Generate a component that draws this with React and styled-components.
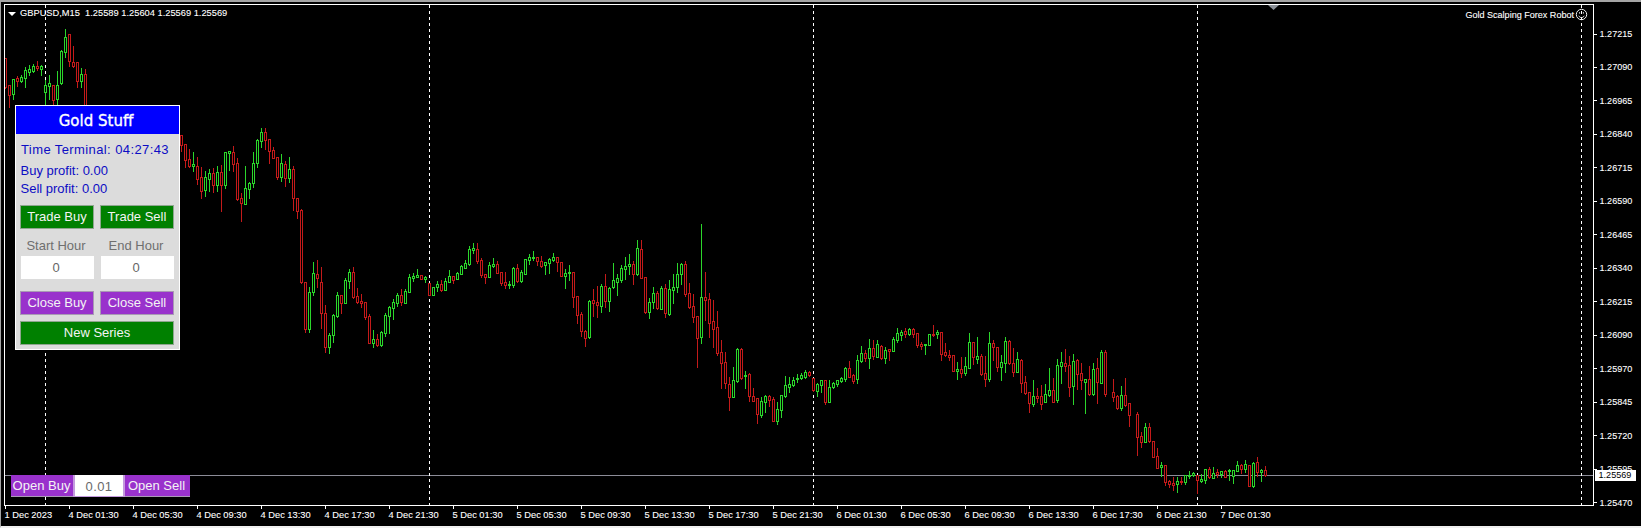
import React from 'react';
import styled, { createGlobalStyle, css } from 'styled-components';

const GlobalStyle = createGlobalStyle`
  html, body {
    margin: 0;
    background: #f0f0f0;
    overflow: hidden;
  }
`;

const BULL = '#2bd62b';
const BEAR = '#c41a1a';

// [first candle x, "type high top bottom low" separated by |, - is an empty slot]
const SERIES = [
  [
    5,
    `r 58 58 87 88|r 85 85 95 107|g 79 79 94 99|r 76 78 81 86|g 75 77 81 82|g 67 70 78 87|g 65 69 72 75|g 64 66 71 72|r 61 66 68 70|g 65 66 69 75|g 80 85 92 106|g 75 83 86 99|r 85 85 100 107|g 71 85 99 105|g 50 51 83 84|g 29 37 52 57|r 34 34 61 66|r 46 62 66 67|r 62 62 81 87|g 68 74 81 87|r 69 74 105 106`,
  ],
  [
    181,
    `r 135 135 145 151|r 144 144 160 167|r 149 159 166 167|g 152 164 166 171|r 157 166 179 184|r 167 177 191 198|g 171 177 190 196|g 169 173 179 191|r 168 173 185 192|g 166 172 185 191|r 165 172 185 211|g 152 152 185 188|g 151 151 153 170|r 146 152 164 171|r 158 163 199 200|r 193 198 203 221|g 166 188 204 204|g 182 183 189 198|g 152 163 183 187|g 139 140 163 167|g 128 132 141 147|r 128 132 140 149|r 139 139 151 163|r 147 150 158 158|r 157 157 177 179|g 154 163 177 181|r 161 164 178 186|g 157 169 178 182|r 166 169 198 210|r 198 198 211 218|r 209 210 282 283|r 282 282 329 332|g 287 292 329 332|g 262 273 292 295|r 260 274 278 287|r 267 282 313 328|r 305 313 347 352|g 333 335 347 353|g 314 315 335 342|g 292 295 316 317|r 295 295 303 313|g 278 280 303 303|g 269 272 281 288|r 267 272 297 298|r 288 296 302 303|r 294 301 303 307|r 302 302 317 319|r 314 316 343 343|g 330 339 343 347|r 334 339 345 346|g 331 332 345 346|g 313 315 333 336|g 306 307 316 333|g 299 302 308 319|g 293 295 303 306|r 289 295 302 305|g 289 291 303 303|g 274 277 292 292|g 273 276 278 281|g 269 275 277 277|r 275 275 279 279|g 276 277 279 282|r 283 283 295 295|g 287 287 295 295|g 281 284 287 291|r 280 284 290 291|g 278 281 290 290|g 270 276 282 282|r 276 276 280 283|g 272 273 279 279|g 265 266 274 274|g 260 263 268 268|g 246 249 264 265|g 243 248 250 253|r 243 249 261 263|r 258 260 275 277|r 274 274 277 283|g 262 265 277 277|g 258 264 266 267|r 261 264 273 273|r 272 272 283 285|r 272 282 285 288|g 281 284 285 288|g 267 268 285 287|r 264 268 281 282|g 270 272 281 282|g 259 259 274 274|g 254 257 260 264|g 251 257 258 260|r 257 257 261 265|r 256 261 266 267|g 262 262 265 274|g 258 259 263 273|g 253 257 260 261|r 257 257 262 271|r 262 262 276 276|g 269 273 276 288|g 265 272 273 280|r 272 272 297 307|r 296 296 315 323|r 312 314 331 336|r 330 331 338 346|g 300 301 337 338|r 289 300 303 316|r 286 302 305 317|g 284 286 306 312|r 274 286 301 307|g 287 288 301 311|g 263 280 287 288|g 274 278 282 295|g 265 268 280 282|g 257 266 269 279|g 254 264 266 274|r 261 264 274 284|g 240 248 274 275|r 240 249 278 278|r 277 277 312 313|g 298 302 312 318|g 287 293 302 308|r 291 293 308 309|g 286 288 309 309|r 284 288 313 317|g 280 289 314 315|g 274 287 290 303|g 263 274 287 292|g 263 264 274 284|r 261 264 294 296|r 283 293 307 308|r 294 306 317 322|r 316 316 338 367|g 224 297 337 343|r 272 297 300 320|r 293 299 323 337|r 300 321 329 347|r 311 327 353 355|r 340 352 363 388|r 352 362 383 388|r 377 384 397 410|g 367 380 397 397|g 348 349 381 382|r 348 349 378 379|g 371 375 376 388|r 373 374 396 401|r 388 396 401 401|r 398 398 414 423|g 397 401 415 417|g 395 396 402 412|r 395 396 400 406|r 397 399 421 421|g 402 409 421 424|g 395 395 410 417|g 376 385 396 397|g 377 384 387 392|g 377 380 385 386|g 374 378 379 382|g 373 375 378 379|g 370 372 377 378|r 371 372 375 376|r 378 378 390 391|g 383 384 391 396|g 380 380 385 392|r 380 380 402 404|g 380 387 402 402|g 382 383 387 388|g 380 380 384 386|g 377 378 381 382|g 367 368 379 381|r 361 368 377 377|r 374 375 381 383|g 355 360 379 383|g 346 353 361 362|r 350 353 358 361|g 339 348 358 368|r 340 348 356 359|g 340 344 357 357|r 345 346 358 359|g 347 350 358 363|r 349 349 351 360|g 337 339 351 351|g 328 333 340 342|g 330 332 335 340|r 328 331 334 337|g 328 329 334 335|r 328 329 334 337|r 333 333 345 347|r 342 344 346 349|g 344 344 345 354|g 334 334 345 345|r 325 334 335 336|g 330 332 334 338|r 332 332 354 360|r 343 352 355 356|r 350 355 357 360|r 355 355 371 371|g 362 369 371 379|r 357 369 373 377|g 357 366 373 375|g 333 342 368 368|r 342 342 357 364|g 337 356 359 363|r 354 356 374 375|r 356 373 379 386|g 332 343 379 381|r 340 343 347 360|r 347 347 367 371|g 355 362 367 380|g 337 341 363 372|r 340 341 363 364|r 348 363 372 376|g 352 359 372 372|r 359 360 383 392|r 376 382 393 394|r 392 392 403 412|g 380 396 404 406|r 388 396 398 402|r 385 396 404 409|g 384 394 402 402|g 368 390 395 396|r 378 390 402 402|g 359 365 400 402|g 352 362 366 383|r 349 363 366 371|r 356 365 387 396|g 354 361 386 404|r 359 360 374 389|r 363 373 380 389|g 379 379 382 413|r 366 379 394 395|g 363 369 394 395|r 358 368 382 403|g 350 352 383 383|r 350 352 394 396|-|r 379 392 397 401|r 395 396 408 409|g 386 395 408 410|r 378 395 405 406|r 403 403 415 426|-|r 412 414 437 455|r 432 436 442 447|g 423 427 442 442|r 423 427 441 442|r 441 441 457 457|r 448 456 468 468|g 462 465 467 476|r 465 465 482 485|r 480 481 484 487|r 477 483 485 490|g 477 481 484 492|r 477 481 482 484|g 475 475 482 484|g 471 475 476 478|g 472 473 475 476|r 475 475 480 493|g 474 479 481 482|g 469 469 480 483|r 467 469 477 478|g 467 473 478 478|r 469 472 474 477|g 471 471 474 477|r 470 471 477 477|g 469 470 471 480|g 470 470 476 483|g 461 465 471 471|r 464 465 469 473|g 460 464 469 472|r 465 465 486 486|g 462 463 486 487|r 457 462 472 476|g 469 470 472 481|r 466 470 475 476`,
  ],
];

const candles = SERIES.flatMap(([start, text]) =>
  text.split('|').flatMap((item, i) => {
    if (item === '-') return [];
    const [type, high, top, bottom, low] = item.split(' ');
    return [{ x: start + i * 4, up: type === 'g', high: +high, top: +top, bottom: +bottom, low: +low }];
  })
);

const SESSION_LINES = [45, 429, 813, 1197, 1581];

const PRICES = [
  '1.27215', '1.27090', '1.26965', '1.26840', '1.26715', '1.26590', '1.26465', '1.26340',
  '1.26215', '1.26090', '1.25970', '1.25845', '1.25720', '1.25595', '1.25470',
];

const HOURS = ['01:30', '05:30', '09:30', '13:30', '17:30', '21:30'];
const TIMES = [
  '1 Dec 2023',
  ...HOURS.map((h) => `4 Dec ${h}`),
  ...HOURS.map((h) => `5 Dec ${h}`),
  ...HOURS.map((h) => `6 Dec ${h}`),
  '7 Dec 01:30',
];

const chartText = css`
  color: #fff;
  -webkit-text-stroke: 0.1px currentColor;
`;

const Terminal = styled.div`
  box-sizing: border-box;
  width: 1641px;
  height: 528px;
  padding: 2px 0 0 3px;
  display: grid;
  grid-template-columns: 1590px 47px;
  grid-template-rows: 502px 20px;
  background: #000;
  border-top: 2px solid #a4a4a4;
  border-left: 1px solid #a4a4a4;
  border-bottom: 2px solid #f0f0f0;
  font-family: 'Liberation Sans', Arial, sans-serif;
  overflow: hidden;
`;

const Plot = styled.div`
  box-sizing: border-box;
  position: relative;
  border: 1px solid #fff;
  overflow: hidden;
`;

const ChartSvg = styled.svg`
  display: block;
  width: 1588px;
  height: 500px;
`;

const Legend = styled.div`
  ${chartText}
  position: absolute;
  left: 3px;
  top: 3px;
  display: flex;
  align-items: center;
  gap: 4px;
  font-size: 9.3px;
  line-height: 11px;
  white-space: pre;
`;

const MenuArrow = styled.span`
  width: 0;
  height: 0;
  border-left: 4px solid transparent;
  border-right: 4px solid transparent;
  border-top: 4.5px solid #fff;
`;

const RobotTag = styled.div`
  ${chartText}
  position: absolute;
  right: 5px;
  top: 3px;
  display: flex;
  align-items: center;
  gap: 1px;
  font-size: 9.05px;
  line-height: 12px;
  white-space: nowrap;
`;

const Panel = styled.section`
  box-sizing: border-box;
  position: absolute;
  left: 10px;
  top: 100px;
  width: 165px;
  height: 245px;
  border: 1px solid #fff;
  background: #dcdcdc;
  display: flex;
  flex-direction: column;
`;

const PanelTitle = styled.h1`
  margin: 0;
  height: 28px;
  background: #0000ff;
  color: #fff;
  font: 400 15px/30px 'DejaVu Sans', sans-serif;
  -webkit-text-stroke: 0.35px #fff;
  text-align: center;
  padding-right: 3px;
  box-sizing: border-box;
`;

const PanelBody = styled.div`
  padding: 8px 5px 5px 4px;
  display: flex;
  flex-direction: column;
`;

const ClockRow = styled.div`
  color: #0c0cc4;
  font-size: 13px;
  line-height: 16px;
  letter-spacing: 0.4px;
  padding-left: 1px;
  white-space: nowrap;
`;

const ProfitRow = styled.div`
  color: #0c0cc4;
  font-size: 13px;
  line-height: 18px;
  padding-left: 0.5px;
  margin-top: ${({ $first }) => ($first ? '4px' : '0')};
`;

const ButtonRow = styled.div`
  display: grid;
  grid-template-columns: 1fr 1fr;
  column-gap: 6px;
  margin-top: ${({ $top }) => $top}px;
`;

const ActionButton = styled.button`
  box-sizing: border-box;
  height: 24px;
  margin: 0;
  padding: 0;
  border: 1px solid ${({ $tone }) => ($tone === 'purple' ? '#a99ab4' : '#8fa68f')};
  background: ${({ $tone }) => ($tone === 'purple' ? '#9932cc' : '#008000')};
  color: #f4f4f4;
  font: 400 13px/22px 'Liberation Sans', Arial, sans-serif;
  text-align: center;
  grid-column: ${({ $wide }) => ($wide ? '1 / -1' : 'auto')};
`;

const HourLabel = styled.div`
  color: #6f6f6f;
  font-size: 13px;
  line-height: 16px;
  text-align: center;
  padding: 9px 2px 2px 0;
`;

const HourInput = styled.input`
  box-sizing: border-box;
  display: block;
  width: calc(100% - 1px);
  height: 23px;
  margin: 0 0 0 1px;
  padding: 0 3px 0 0;
  border: 0;
  background: #fff;
  color: #666;
  font: 400 13px 'Liberation Sans', Arial, sans-serif;
  text-align: center;
`;

const OpenBar = styled.div`
  position: absolute;
  left: 6px;
  top: 470px;
  display: flex;
  height: 22px;
`;

const OpenButton = styled.button`
  box-sizing: border-box;
  width: ${({ $width }) => $width}px;
  height: 22px;
  margin: 0;
  padding: 1px ${({ $inset }) => $inset}px 0 0;
  border: 0;
  border-bottom: 1px solid #a99ab4;
  background: #9932cc;
  color: #f4f4f4;
  font: 400 13px/20px 'Liberation Sans', Arial, sans-serif;
  text-align: center;
`;

const LotInput = styled.input`
  box-sizing: border-box;
  width: 52px;
  height: 22px;
  margin: 0;
  padding: 1px 0 0;
  border: solid #c49ade;
  border-width: 0 2px 1px;
  background: #fff;
  color: #6a6a6a;
  font: 400 13px 'Liberation Sans', Arial, sans-serif;
  letter-spacing: 0.4px;
  text-align: center;
`;

const PriceAxis = styled.div`
  grid-column: 2;
  grid-row: 1 / 3;
  position: relative;
  padding-top: 13.27px;
`;

const PriceRow = styled.div`
  ${chartText}
  height: 33.47px;
  display: flex;
  align-items: center;
  gap: 2.5px;
  font-size: 9.1px;
  &::before {
    content: '';
    width: 3px;
    height: 1px;
    background: #fff;
  }
`;

const PriceTag = styled.div`
  position: absolute;
  left: 1px;
  top: 466px;
  width: 41px;
  height: 11px;
  padding-left: 3.5px;
  box-sizing: border-box;
  background: #fff;
  color: #000;
  font-size: 9.1px;
  line-height: 11px;
`;

const TimeAxis = styled.div`
  display: flex;
  padding-left: 1px;
`;

const TimeLabel = styled.div`
  ${chartText}
  flex: 0 0 64px;
  padding-top: 3.5px;
  background: linear-gradient(#fff, #fff) left top / 1px 3px no-repeat;
  font-size: 9.3px;
  line-height: 11px;
  white-space: nowrap;
  text-indent: -0.5px;
`;

function Candle({ x, up, high, top, bottom, low }) {
  const color = up ? BULL : BEAR;
  const cx = x + 0.5;
  return (
    <>
      <line x1={cx} x2={cx} y1={high} y2={low + 1} stroke={color} />
      <rect x={cx - 1} y={top + 0.5} width={2} height={Math.max(bottom - top, 1)} fill="#000" stroke={color} />
    </>
  );
}

function Chart() {
  return (
    <ChartSvg viewBox="5 5 1588 500" shapeRendering="crispEdges">
      <line x1="5" x2="1593" y1="475.5" y2="475.5" stroke="#8c8c98" />
      {SESSION_LINES.map((x) => (
        <line key={x} x1={x + 0.5} x2={x + 0.5} y1="5" y2="505" stroke="#fff" strokeDasharray="3 3" />
      ))}
      {candles.map((c) => (
        <Candle key={c.x} {...c} />
      ))}
      <polygon points="1268,5 1279,5 1273.5,10" fill="#8a8f96" shapeRendering="auto" />
    </ChartSvg>
  );
}

function Smiley() {
  return (
    <svg width="13" height="13" viewBox="0 0 13 13" fill="none" stroke="#f2f2f2">
      <circle cx="6.5" cy="6.5" r="5.2" />
      <path d="M3.8 7.8c.7 1.3 1.6 1.8 2.7 1.8s2-.5 2.7-1.8" />
      <path d="M4.6 4.2v1.4M8.4 4.2v1.4" />
    </svg>
  );
}

function TradePanel() {
  return (
    <Panel>
      <PanelTitle>Gold Stuff</PanelTitle>
      <PanelBody>
        <ClockRow>Time Terminal: 04:27:43</ClockRow>
        <ProfitRow $first>Buy profit: 0.00</ProfitRow>
        <ProfitRow>Sell profit: 0.00</ProfitRow>
        <ButtonRow $top={7}>
          <ActionButton>Trade Buy</ActionButton>
          <ActionButton>Trade Sell</ActionButton>
        </ButtonRow>
        <ButtonRow $top={0}>
          <div>
            <HourLabel>Start Hour</HourLabel>
            <HourInput readOnly value="0" />
          </div>
          <div>
            <HourLabel>End Hour</HourLabel>
            <HourInput readOnly value="0" />
          </div>
        </ButtonRow>
        <ButtonRow $top={12}>
          <ActionButton $tone="purple">Close Buy</ActionButton>
          <ActionButton $tone="purple">Close Sell</ActionButton>
        </ButtonRow>
        <ButtonRow $top={6}>
          <ActionButton $wide>New Series</ActionButton>
        </ButtonRow>
      </PanelBody>
    </Panel>
  );
}

export default function App() {
  return (
    <>
      <GlobalStyle />
      <Terminal>
        <Plot>
          <Chart />
          <Legend>
            <MenuArrow />
            {'GBPUSD,M15  1.25589 1.25604 1.25569 1.25569'}
          </Legend>
          <RobotTag>
            Gold Scalping Forex Robot
            <Smiley />
          </RobotTag>
          <TradePanel />
          <OpenBar>
            <OpenButton $width={62} $inset={1}>Open Buy</OpenButton>
            <LotInput readOnly value="0.01" />
            <OpenButton $width={65} $inset={2}>Open Sell</OpenButton>
          </OpenBar>
        </Plot>
        <PriceAxis>
          {PRICES.map((p) => (
            <PriceRow key={p}>{p}</PriceRow>
          ))}
          <PriceTag>1.25569</PriceTag>
        </PriceAxis>
        <TimeAxis>
          {TIMES.map((t) => (
            <TimeLabel key={t}>{t}</TimeLabel>
          ))}
        </TimeAxis>
      </Terminal>
    </>
  );
}
